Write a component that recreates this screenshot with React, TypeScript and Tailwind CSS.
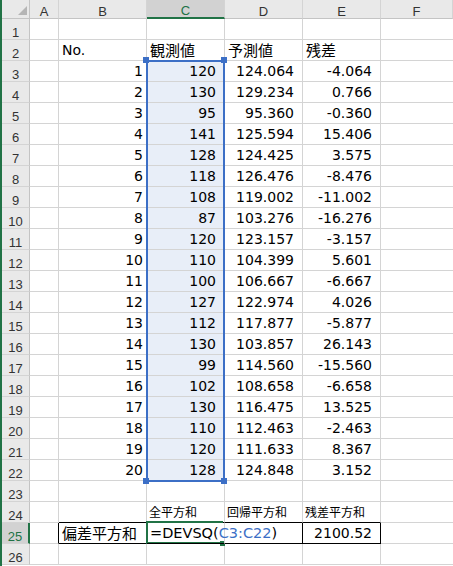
import React from "react";

const obs = [120, 130, 95, 141, 128, 118, 108, 87, 120, 110, 100, 127, 112, 130, 99, 102, 130, 110, 120, 128];
const pred = ["124.064", "129.234", "95.360", "125.594", "124.425", "126.476", "119.002", "103.276", "123.157", "104.399", "106.667", "122.974", "117.877", "103.857", "114.560", "108.658", "116.475", "112.463", "111.633", "124.848"];
const resid = ["-4.064", "0.766", "-0.360", "15.406", "3.575", "-8.476", "-11.002", "-16.276", "-3.157", "5.601", "-6.667", "4.026", "-5.877", "26.143", "-15.560", "-6.658", "13.525", "-2.463", "8.367", "3.152"];

const cell = "h-[21px] border-r border-b border-[#d4d4d4] flex items-center whitespace-nowrap leading-[20px] text-[14px] text-black";
const jp = "font-['Noto_Sans_CJK_JP',sans-serif] text-[15px]";
const small = "font-['Noto_Sans_CJK_JP',sans-serif] text-[12px]";

function RowHead({ n }: { n: number }) {
  const active = n === 25;
  return (
    <div
      className={
        "h-[21px] border-b border-[#d4d4d4] flex items-end justify-center leading-none text-[13px] font-['Liberation_Sans',sans-serif] " +
        (active
          ? "bg-[#d2d2d2] text-[#217346] border-r-2 border-r-[#217346]"
          : "bg-[#e9e9e9] text-[#333] border-r border-r-[#c4c4c4]")
      }
    >
      {n}
    </div>
  );
}

function ColHead({ label }: { label: string }) {
  const active = label === "C";
  return (
    <div
      className={
        "h-[19px] border-r border-[#d4d4d4] flex items-end justify-center leading-none text-[13px] font-['Liberation_Sans',sans-serif] " +
        (active
          ? "bg-[#d2d2d2] text-[#217346] border-b-2 border-b-[#217346]"
          : "bg-[#e9e9e9] text-[#333] border-b border-b-[#c4c4c4]")
      }
    >
      {label}
    </div>
  );
}

function Row({ r }: { r: number }) {
  const i = r - 3;
  const data = i >= 0 && i < 20;
  const sel = data ? " bg-[#e8eef8]" : "";
  return (
    <>
      <RowHead n={r} />
      <div className={cell + (r === 25 ? " border-r-black" : "")} />
      <div className={cell + (r === 24 ? " border-b-black" : "") + (r === 25 ? " border-r-black border-b-black pl-[3px]" : "") + (r === 2 ? " pl-[3px]" : "") + (data ? " justify-end pr-[3px]" : "")}>
        {r === 2 && "No."}
        {data && i + 1}
        {r === 25 && <span className={jp}>偏差平方和</span>}
      </div>
      <div className={cell + sel + (r === 24 ? " border-b-black pl-[2px]" : "") + (r === 25 ? " border-b-black pl-[3px] relative z-10" : "") + (r === 2 ? " pl-[3px]" : "") + (data ? " justify-end pr-[8px]" : "")}>
        {r === 2 && <span className={jp}>観測値</span>}
        {data && obs[i]}
        {r === 24 && <span className={small}>全平方和</span>}
        {r === 25 && (
          <span className="text-[14.5px]">
            =DEVSQ(<span className="text-[#3c6fc6]">C3:C22</span>)
          </span>
        )}
      </div>
      <div className={cell + (r === 24 ? " border-b-black pl-[2px]" : "") + (r === 25 ? " border-r-black border-b-black" : "") + (r === 2 ? " pl-[3px]" : "") + (data ? " justify-end pr-[8px]" : "")}>
        {r === 2 && <span className={jp}>予測値</span>}
        {data && pred[i]}
        {r === 24 && <span className={small}>回帰平方和</span>}
      </div>
      <div className={cell + (r === 24 ? " border-b-black pl-[2px]" : "") + (r === 25 ? " border-r-black border-b-black justify-end pr-[8px]" : "") + (r === 2 ? " pl-[3px]" : "") + (data ? " justify-end pr-[8px]" : "")}>
        {r === 2 && <span className={jp}>残差</span>}
        {data && resid[i]}
        {r === 24 && <span className={small}>残差平方和</span>}
        {r === 25 && "2100.52"}
      </div>
      <div className={cell + " border-r-0"} />
    </>
  );
}

export default function App() {
  const rows = Array.from({ length: 26 }, (_, k) => k + 1);
  return (
    <div className="w-[453px] h-[566px] overflow-hidden bg-white border-l-2 border-[#217346] font-['DejaVu_Sans','Noto_Sans_CJK_JP',sans-serif]">
      <div className="relative grid grid-cols-[28px_29px_88px_78px_78px_78px_1fr]">
        <div className="h-[19px] bg-[#e9e9e9] border-r border-b border-r-[#c4c4c4] border-b-[#c4c4c4] relative">
          <svg width="27" height="18" className="absolute left-0 top-0">
            <polygon points="25,6 25,15 16,15" fill="#b5b5b5" />
          </svg>
        </div>
        {["A", "B", "C", "D", "E", "F"].map((l) => (
          <ColHead key={l} label={l} />
        ))}
        {rows.map((r) => (
          <Row key={r} r={r} />
        ))}

        {/* formula reference range C3:C22 */}
        <div className="absolute left-[144px] top-[60px] w-[79px] h-[422px] border-2 border-[#3c6fc6] pointer-events-none" />
        <div className="absolute left-[141px] top-[57px] w-[6px] h-[6px] bg-[#3c6fc6]" />
        <div className="absolute left-[219px] top-[57px] w-[6px] h-[6px] bg-[#3c6fc6]" />
        <div className="absolute left-[141px] top-[478px] w-[6px] h-[6px] bg-[#3c6fc6]" />
        <div className="absolute left-[219px] top-[478px] w-[6px] h-[6px] bg-[#3c6fc6]" />

        {/* active cell C25 */}
        <div className="absolute left-[144px] top-[521px] w-[77px] h-[23px] border-l-2 border-t-2 border-b-2 border-[#217346] pointer-events-none" />
        <div className="absolute left-[218px] top-[541px] w-[5px] h-[5px] bg-[#217346]" />
      </div>
    </div>
  );
}
